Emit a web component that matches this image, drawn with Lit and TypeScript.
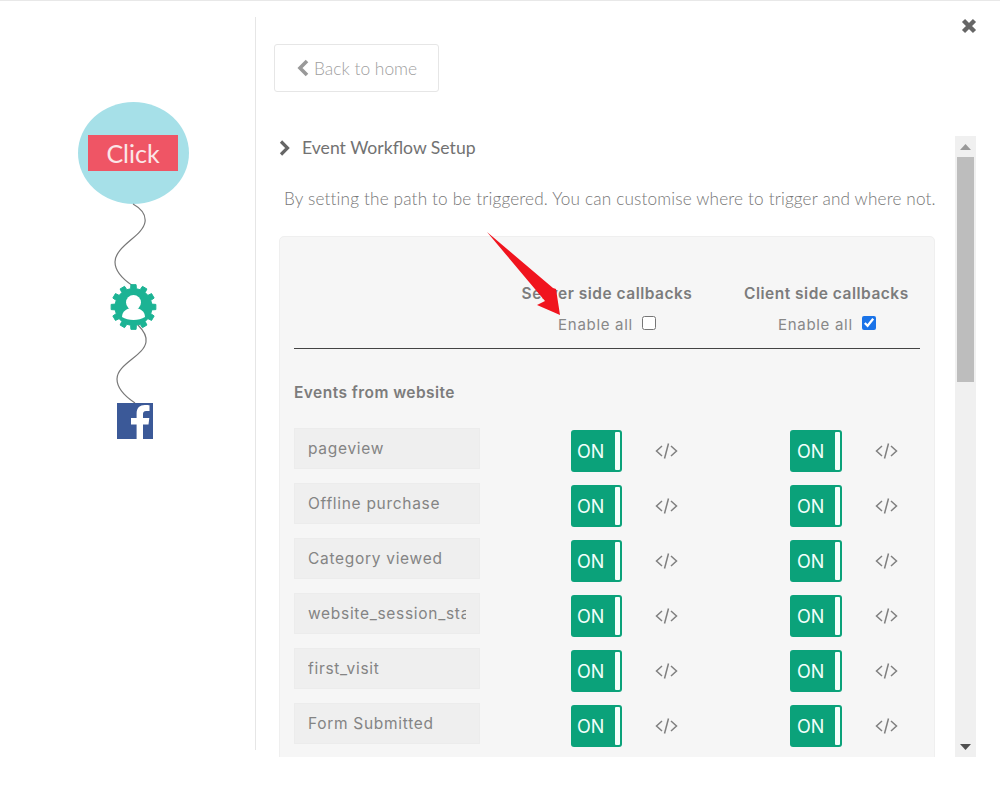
import { LitElement, html, css, svg } from "lit";
import { customElement } from "lit/decorators.js";

function gearPath(cx: number, cy: number, outer: number, root: number, teeth: number) {
  const pts: string[] = [];
  const step = (Math.PI * 2) / teeth;
  for (let i = 0; i < teeth; i++) {
    const a = i * step - Math.PI / 2;
    const corners: [number, number][] = [
      [root, a - step * 0.3],
      [outer, a - step * 0.22],
      [outer, a + step * 0.22],
      [root, a + step * 0.3],
    ];
    for (const [r, t] of corners) {
      pts.push(`${(cx + r * Math.cos(t)).toFixed(2)} ${(cy + r * Math.sin(t)).toFixed(2)}`);
    }
  }
  return "M" + pts.join("L") + "Z";
}

const EVENTS = ["pageview", "Offline purchase", "Category viewed", "website_session_start", "first_visit", "Form Submitted"];

@customElement("app-root")
export class AppRoot extends LitElement {
  static styles = css`
    :host {
      display: block;
      position: relative;
      width: 1000px;
      height: 792px;
      overflow: hidden;
      background: #fff;
      box-shadow: inset 0 1px 0 #e8e8e8;
      font-family: "Lato", "Liberation Sans", sans-serif;
      color: #777;
    }
    .page { display: flex; align-items: flex-start; height: 100%; }
    .side {
      flex: none;
      width: 256px;
      height: 733px;
      margin-top: 17px;
      box-sizing: border-box;
      border-right: 1px solid #e6e6e6;
    }
    .side svg { display: block; }
    .click-text { font-family: "Lato", sans-serif; font-size: 25px; fill: #fbe6e8; }
    .main { flex: 1; min-width: 0; padding: 44px 0 0 18px; }
    .back {
      box-sizing: border-box;
      width: 165px;
      height: 48px;
      border: 1px solid #e6e6e6;
      border-radius: 3px;
      display: flex;
      align-items: center;
      gap: 5px;
      padding-left: 22px;
      font-size: 17.4px;
      font-weight: 300;
      color: #a0a0a0;
    }
    .scroller { display: flex; gap: 20px; height: 621px; margin: 44px 0 0 5px; }
    .content { width: 660px; margin-right: -4px; overflow: hidden; }
    .heading {
      display: flex;
      align-items: center;
      gap: 12px;
      height: 23px;
      font-size: 17.6px;
      color: #727272;
    }
    .para {
      margin: 28px 0 0 5px;
      height: 24px;
      line-height: 24px;
      font-size: 17.2px;
      font-weight: 300;
      letter-spacing: 0.16px;
      white-space: nowrap;
      color: #777;
    }
    .card {
      box-sizing: border-box;
      width: 656px;
      margin-top: 25px;
      padding: 46px 14px 12px;
      background: #f6f6f6;
      border: 1px solid #efefef;
      border-radius: 5px;
      font-family: "Inter", "Liberation Sans", sans-serif;
    }
    .head {
      display: grid;
      grid-template-columns: 203px 220px 1fr;
      padding-bottom: 13px;
      border-bottom: 1px solid #444;
    }
    .col { display: flex; flex-direction: column; align-items: center; }
    .col.last { align-items: flex-start; padding-left: 27px; }
    .col-title { font-size: 15.5px; font-weight: 600; line-height: 22px; color: #7c7c7c; white-space: nowrap; letter-spacing: 0.5px; }
    .enable { display: flex; align-items: center; gap: 9px; height: 22px; margin-top: 8px; font-size: 15px; color: #888; letter-spacing: 0.7px; white-space: nowrap; }
    .col.last .enable { padding-left: 34px; }
    .enable input { width: 14px; height: 14px; margin: 0 0 2px; accent-color: #1a73e8; }
    .section { margin: 33px 0 24px; font-size: 15.5px; font-weight: 600; line-height: 22px; color: #7c7c7c; letter-spacing: 0.45px; }
    .rows { display: grid; grid-template-columns: 277px 219px 1fr; grid-auto-rows: 55px; }
    .name {
      box-sizing: border-box;
      width: 186px;
      height: 41px;
      padding: 0 13px;
      display: flex;
      align-items: center;
      background: #efefef;
      border: 1px solid #ececec;
      font-size: 15.5px;
      letter-spacing: 0.7px;
      color: #848484;
    }
    .name span { overflow: hidden; white-space: nowrap; }
    .cell { display: flex; align-items: flex-start; gap: 33px; padding-top: 2px; }
    .toggle {
      position: relative;
      box-sizing: border-box;
      width: 51px;
      height: 42px;
      padding-left: 6px;
      display: flex;
      align-items: center;
      border-radius: 3px;
      background: #0ba27a;
      color: #f2fffb;
      font-size: 18px;
    }
    .cell.client .toggle { width: 52px; padding-left: 7px; }
    .toggle::after {
      content: "";
      position: absolute;
      top: 2px;
      bottom: 2px;
      right: 2px;
      width: 5px;
      border-radius: 1px;
      background: #f4fffb;
    }
    .code { display: block; margin-top: 12px; }
    .bar { flex: none; width: 21px; background: #f0f0f0; display: flex; flex-direction: column; }
    .arrow-box { height: 21px; display: flex; align-items: center; justify-content: center; }
    .thumb { width: 17px; height: 225px; margin: 0 auto; background: #bdbdbd; }
    .spacer { flex: 1; }
    .close { position: absolute; top: 18px; left: 961px; display: block; }
    .pointer { position: absolute; left: 480px; top: 225px; display: block; }
  `;

  private code() {
    return html`<svg class="code" width="23" height="18" viewBox="0 0 23 18" fill="none" stroke="#808080" stroke-width="1.5">
      <path d="M7 4 L1.5 9 L7 14" /><path d="M13.5 1.5 L9.5 16.5" /><path d="M16 4 L21.5 9 L16 14" />
    </svg>`;
  }

  private diagram() {
    return html`<svg width="255" height="733" viewBox="0 17 255 733">
      <ellipse cx="133.5" cy="153" rx="55.5" ry="51" fill="#a6e0e8" />
      <rect x="88" y="135" width="90" height="36" fill="#ef5565" />
      <text class="click-text" x="133" y="163" text-anchor="middle">Click</text>
      <path d="M133 204 C142 209 146 215 145 222 C143 236 115 246 115 262 C115 272 124 280 133 286" fill="none" stroke="#777" stroke-width="1.2" />
      <path d="M138 325 C144 331 147 336 146 342 C144 356 117 364 117 379 C117 389 126 397 135 403" fill="none" stroke="#777" stroke-width="1.2" />
      ${svg`<path d=${gearPath(133.5, 307, 22.5, 18.5, 12)} fill="#1cb394" stroke="#1cb394" stroke-width="1" stroke-linejoin="round" />`}
      <circle cx="133.5" cy="302.5" r="7.5" fill="#fff" />
      <path d="M122 317 C122 311 127 309 130 308 L137 308 C140 309 145 311 145 317 C139 321 128 321 122 317 Z" fill="#fff" />
      <rect x="117" y="403" width="36" height="36" fill="#3b5998" />
      <path d="M143 439 V424.5 H148.5 L149.3 418 H143 V414.2 C143 412.3 143.6 411 146.2 411 H149.5 V405.2 C149 405.1 147 405 144.8 405 C140 405 136.6 407.8 136.6 413.4 V418 H131 V424.5 H136.6 V439 Z" fill="#fff" />
    </svg>`;
  }

  render() {
    return html`
      <div class="page">
        <aside class="side">${this.diagram()}</aside>
        <main class="main">
          <div class="back">
            <svg width="12" height="18" viewBox="0 0 12 18" fill="none" stroke="#999" stroke-width="3.6"><path d="M10 2 L3 9 L10 16" /></svg>
            <span>Back to home</span>
          </div>
          <div class="scroller">
            <div class="content">
              <div class="heading">
                <svg width="11" height="16" viewBox="0 0 11 16" fill="none" stroke="#666" stroke-width="3.2"><path d="M2 1.5 L8.5 8 L2 14.5" /></svg>
                <span>Event Workflow Setup</span>
              </div>
              <div class="para">By setting the path to be triggered. You can customise where to trigger and where not.</div>
              <section class="card">
                <div class="head">
                  <div></div>
                  <div class="col">
                    <div class="col-title">Server side callbacks</div>
                    <label class="enable">Enable all <input type="checkbox" /></label>
                  </div>
                  <div class="col last">
                    <div class="col-title">Client side callbacks</div>
                    <label class="enable">Enable all <input type="checkbox" checked /></label>
                  </div>
                </div>
                <div class="section">Events from website</div>
                <div class="rows">
                  ${EVENTS.map(
                    (e) => html`
                      <div class="name"><span>${e}</span></div>
                      <div class="cell"><div class="toggle">ON</div>${this.code()}</div>
                      <div class="cell client"><div class="toggle">ON</div>${this.code()}</div>
                    `
                  )}
                </div>
              </section>
            </div>
            <div class="bar">
              <div class="arrow-box"><svg width="11" height="6" viewBox="0 0 11 6"><path d="M5.5 0 L11 6 H0 Z" fill="#999" /></svg></div>
              <div class="thumb"></div>
              <div class="spacer"></div>
              <div class="arrow-box"><svg width="11" height="6" viewBox="0 0 11 6"><path d="M0 0 H11 L5.5 6 Z" fill="#505050" /></svg></div>
            </div>
          </div>
        </main>
      </div>
      <svg class="close" width="16" height="16" viewBox="0 0 16 16" fill="none" stroke="#666" stroke-width="4.4"><path d="M2.5 2.5 L13.5 13.5 M13.5 2.5 L2.5 13.5" /></svg>
      <svg class="pointer" width="90" height="100" viewBox="480 225 90 100"><polygon points="487,232 553,288 556,289 560,315 537,305 545,301" fill="#f0141e" /></svg>
    `;
  }
}
